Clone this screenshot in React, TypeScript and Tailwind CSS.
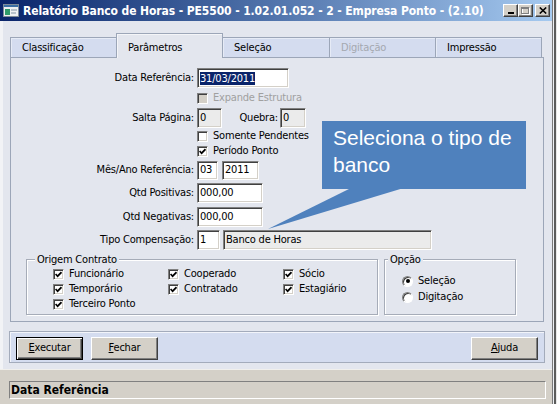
import React from "react";

const sunken =
  "border border-t-[#808080] border-l-[#808080] border-b-white border-r-white shadow-[inset_1px_1px_0_#404040,inset_-1px_-1px_0_#d4d0c8]";

function Check({ checked = false, disabled = false }: { checked?: boolean; disabled?: boolean }) {
  return (
    <span className={`relative block w-[11px] h-[11px] shrink-0 ${sunken} ${disabled ? "bg-[#d4d0c8]" : "bg-white"}`}>
      {checked && (
        <svg viewBox="0 0 7 7" className="absolute left-[1px] top-[1px] w-[7px] h-[7px]">
          <path d="M0.6 3 L2.6 5.2 L6.5 1.2" fill="none" stroke="#000" strokeWidth="1.7" />
        </svg>
      )}
    </span>
  );
}

function Radio({ checked = false }: { checked?: boolean }) {
  return (
    <span className="relative block w-[11px] h-[11px] shrink-0 rounded-full bg-white border border-t-[#808080] border-l-[#808080] border-b-white border-r-white shadow-[inset_1px_1px_0_#404040]">
      {checked && <span className="absolute left-[2.5px] top-[2.5px] w-[4px] h-[4px] rounded-full bg-black" />}
    </span>
  );
}

function CheckRow({ label, checked = false, disabled = false }: { label: string; checked?: boolean; disabled?: boolean }) {
  return (
    <div className="flex items-center gap-[5px] h-full">
      <Check checked={checked} disabled={disabled} />
      <span className={`whitespace-nowrap ${disabled ? "text-[#a0a0a0]" : "text-black"}`}>{label}</span>
    </div>
  );
}

function Field({ w, children, disabled = false, h = "h-[20px]" }: { w: string; children?: React.ReactNode; disabled?: boolean; h?: string }) {
  return (
    <div className={`${w} ${h} ${sunken} ${disabled ? "bg-[#ebebeb]" : "bg-white"} flex items-center pl-[2px] overflow-hidden whitespace-nowrap shrink-0`}>
      {children}
    </div>
  );
}

function Label({ children }: { children: React.ReactNode }) {
  return <span className="w-[186px] shrink-0 text-right pr-[3px] whitespace-nowrap">{children}</span>;
}

function Btn({ children, def = false }: { children: React.ReactNode; def?: boolean }) {
  return (
    <div
      className={`h-[23px] w-[67px] shrink-0 bg-[#d4d0c8] flex items-center justify-center ${
        def
          ? "border border-black shadow-[inset_1px_1px_0_#fff,inset_-1px_-1px_0_#404040,inset_-2px_-2px_0_#808080]"
          : "border border-t-white border-l-white border-b-[#404040] border-r-[#404040] shadow-[inset_-1px_-1px_0_#808080]"
      }`}
    >
      {children}
    </div>
  );
}

function WinBtn({ children }: { children: React.ReactNode }) {
  return (
    <div className="w-[15px] h-[13px] bg-[#d4d0c8] border border-t-white border-l-white border-b-[#404040] border-r-[#404040] shadow-[inset_-1px_-1px_0_#808080] flex items-center justify-center">
      {children}
    </div>
  );
}

const tabs = [
  { label: "Classificação", w: "w-[107px]", active: false, disabled: false },
  { label: "Parâmetros", w: "w-[107px]", active: true, disabled: false },
  { label: "Seleção", w: "w-[108px]", active: false, disabled: false },
  { label: "Digitação", w: "w-[107px]", active: false, disabled: true },
  { label: "Impressão", w: "w-[107px]", active: false, disabled: false },
];

export default function App() {
  return (
    <div className="relative w-[557px] h-[404px] overflow-hidden flex bg-[#eceae6] font-['DejaVu_Sans_Condensed','DejaVu_Sans',sans-serif] [font-stretch:condensed] text-[11px] tracking-[-0.2px] text-black">
      {/* window */}
      <div className="w-[552px] h-full flex flex-col">
        {/* title bar */}
        <div className="h-[21px] shrink-0 flex items-center bg-linear-to-r from-[#0a246a] to-[#a6caf0] pl-[3px] pr-[2px]">
          <svg width="16" height="13" viewBox="0 0 16 13" className="shrink-0">
            <rect x="0.5" y="0.5" width="15" height="12" fill="#eef0f2" stroke="#7f8c99" />
            <rect x="1" y="1" width="14" height="2" fill="#3a6ea5" />
            <rect x="2" y="5" width="5" height="6" fill="#2f9a6a" />
            <rect x="8" y="5" width="6" height="2" fill="#b8c2cc" />
            <rect x="8" y="8" width="5" height="2" fill="#b8c2cc" />
          </svg>
          <span className="ml-[4px] text-white font-bold text-[12px] tracking-[-0.1px] whitespace-nowrap">
            Relatório Banco de Horas - PE5500 - 1.02.01.052 - 2 - Empresa Ponto - (2.10)
          </span>
          <div className="ml-auto flex items-center">
            <WinBtn>
              <svg width="8" height="7" viewBox="0 0 8 7">
                <rect x="1" y="5" width="6" height="2" fill="#000" />
              </svg>
            </WinBtn>
            <WinBtn>
              <svg width="9" height="8" viewBox="0 0 9 8">
                <rect x="1.5" y="1.5" width="7" height="6" fill="none" stroke="#ffffff" />
                <rect x="0.5" y="0.5" width="7" height="6" fill="none" stroke="#808080" />
                <rect x="0.5" y="1" width="7" height="1" fill="#808080" />
              </svg>
            </WinBtn>
            <div className="ml-[2px]">
              <WinBtn>
                <svg width="8" height="7" viewBox="0 0 8 7">
                  <path d="M0.8 0.5 L7.2 6.5 M7.2 0.5 L0.8 6.5" stroke="#000" strokeWidth="1.6" />
                </svg>
              </WinBtn>
            </div>
          </div>
        </div>

        {/* body */}
        <div className="h-[348px] shrink-0 flex flex-col bg-[#e3e6ee] pl-[10px] pt-[12px] shadow-[inset_3px_0_0_#f2f3f6]">
          {/* tabs */}
          <div className="h-[24px] flex items-end">
            {tabs.map((t, i) => (
              <div
                key={t.label}
                className={`${t.w} ${i > 0 ? "-ml-px" : ""} border border-b-0 border-[#9ca6b8] pl-[11px] leading-[19px] whitespace-nowrap ${
                  t.active
                    ? "h-[25px] -mb-px pt-[4px] bg-[#e3e6ee] relative z-10 shadow-[inset_1px_1px_0_#f4f5f8]"
                    : "h-[20px] bg-[#d4dcef] shadow-[inset_1px_1px_0_#e6ebf6]"
                } ${t.disabled ? "text-[#a4a8b0]" : "text-black"}`}
              >
                {t.label}
              </div>
            ))}
          </div>

          {/* panel */}
          <div className="w-[534px] h-[265px] border border-[#9ca6b8] bg-[#e3e6ee] flex flex-col pt-[10px]">
            <div className="flex items-center h-[20px]">
              <Label>Data Referência:</Label>
              <Field w="w-[92px]">
                <span className="bg-[#0a246a] text-white leading-[13px]">31/03/2011</span>
              </Field>
            </div>
            <div className="flex items-center h-[20px]">
              <span className="w-[186px] shrink-0" />
              <CheckRow label="Expande Estrutura" disabled />
            </div>
            <div className="flex items-center h-[20px]">
              <Label>Salta Página:</Label>
              <Field w="w-[25px]" disabled>0</Field>
              <span className="w-[58px] shrink-0 text-right pr-[2px]">Quebra:</span>
              <Field w="w-[26px]" disabled>0</Field>
            </div>
            <div className="flex items-center h-[15px] mt-[1px]">
              <span className="w-[186px] shrink-0" />
              <CheckRow label="Somente Pendentes" />
            </div>
            <div className="flex items-center h-[15px]">
              <span className="w-[186px] shrink-0" />
              <CheckRow label="Período Ponto" checked />
            </div>
            <div className="flex items-center h-[19px] mt-[2px]">
              <Label>Mês/Ano Referência:</Label>
              <Field w="w-[21px]" h="h-[19px]">03</Field>
              <div className="ml-[4px]">
                <Field w="w-[37px]" h="h-[19px]">2011</Field>
              </div>
            </div>
            <div className="flex items-center h-[20px] mt-[3px]">
              <Label>Qtd Positivas:</Label>
              <Field w="w-[66px]">000,00</Field>
            </div>
            <div className="flex items-center h-[20px] mt-[4px]">
              <Label>Qtd Negativas:</Label>
              <Field w="w-[66px]">000,00</Field>
            </div>
            <div className="flex items-center h-[20px] mt-[3px]">
              <Label>Tipo Compensação:</Label>
              <Field w="w-[23px]">1</Field>
              <div className="ml-[3px]">
                <Field w="w-[209px]" disabled>Banco de Horas</Field>
              </div>
            </div>

            {/* group boxes */}
            <div className="flex mt-[9px] ml-[15px]">
              <div className="relative w-[352px] h-[56px] border border-[#a6acb8] shadow-[1px_1px_0_#fff,inset_1px_1px_0_#fff] pt-[7px] pl-[26px]">
                <span className="absolute left-[8px] -top-[7px] px-[2px] leading-[13px] bg-[#e3e6ee]">Origem Contrato</span>
                <div className="grid grid-cols-[115px_115px_1fr] auto-rows-[15px]">
                  <CheckRow label="Funcionário" checked />
                  <CheckRow label="Cooperado" checked />
                  <CheckRow label="Sócio" checked />
                  <CheckRow label="Temporário" checked />
                  <CheckRow label="Contratado" checked />
                  <CheckRow label="Estagiário" checked />
                  <CheckRow label="Terceiro Ponto" checked />
                </div>
              </div>
              <div className="relative ml-[6px] w-[132px] h-[56px] border border-[#a6acb8] shadow-[1px_1px_0_#fff,inset_1px_1px_0_#fff] pt-[13px] pl-[17px]">
                <span className="absolute left-[3px] -top-[7px] px-[2px] leading-[13px] bg-[#e3e6ee]">Opção</span>
                <div className="flex items-center gap-[5px] h-[16px]">
                  <Radio checked />
                  <span>Seleção</span>
                </div>
                <div className="flex items-center gap-[5px] h-[16px]">
                  <Radio />
                  <span>Digitação</span>
                </div>
              </div>
            </div>
          </div>

          {/* button bar */}
          <div className="-ml-px mt-[9px] w-[536px] h-[32px] bg-[#d4dcef] border border-[#a3abbb] shadow-[inset_1px_1px_0_#f2f4fa] flex items-start pt-[5px] pl-[6px] pr-[6px]">
            <Btn def>
              <span><span className="underline">E</span>xecutar</span>
            </Btn>
            <div className="ml-[8px]">
              <Btn>
                <span><span className="underline">F</span>echar</span>
              </Btn>
            </div>
            <div className="ml-auto">
              <Btn>
                <span><span className="underline">A</span>juda</span>
              </Btn>
            </div>
          </div>
        </div>

        {/* status area */}
        <div className="flex-1 bg-[#d4d0c8] pt-[12px] pl-[9px] shadow-[inset_0_1px_0_#f0efec]">
          <div className="w-[537px] h-[18px] border border-t-[#808080] border-l-[#808080] border-b-white border-r-white pl-[1px] font-bold text-[12px] tracking-normal leading-[16px] whitespace-nowrap">
            Data Referência
          </div>
        </div>
      </div>

      {/* right edge */}
      <div className="w-[5px] h-full flex">
        <div className="w-[1px] h-full bg-[#7a7a7a]" />
        <div className="w-[1px] h-full bg-[#eef0f4]" />
        <div className="w-[2px] h-full bg-[#5c5c5c]" />
        <div className="w-[1px] h-full bg-[#e8e8e8]" />
      </div>

      {/* callout */}
      <div className="absolute left-[322px] top-[121px] w-[204px] h-[68px] bg-[#4f81bd] text-white font-['Liberation_Sans',Arial,sans-serif] [font-stretch:normal] text-[21px] leading-[27px] tracking-normal pl-[11px] pt-[3px]">
        Seleciona o tipo de
        <br />
        banco
      </div>
      <svg className="absolute left-[260px] top-[187px]" width="150" height="45" viewBox="0 0 150 45">
        <polygon points="93,0 147,0 8,42" fill="#4f81bd" />
      </svg>
    </div>
  );
}
